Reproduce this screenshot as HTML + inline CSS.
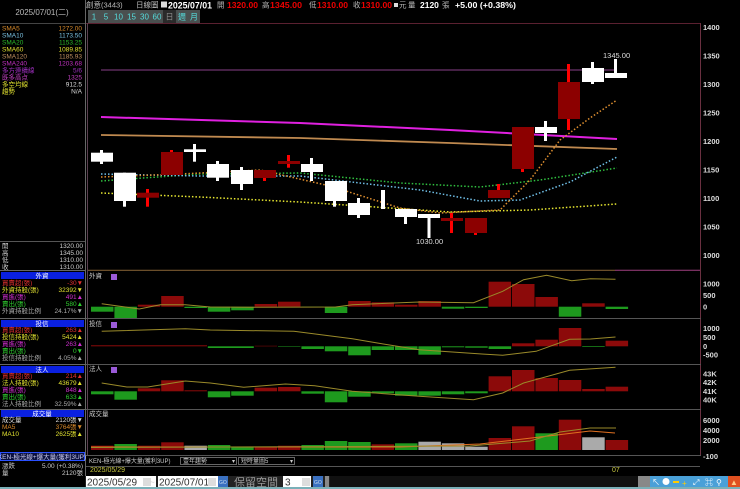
<!DOCTYPE html>
<html><head><meta charset="utf-8"><style>
html,body{margin:0;padding:0;background:#000;width:740px;height:489px;overflow:hidden}
svg{display:block}
text{font-family:"Liberation Sans","Noto Sans CJK TC",sans-serif}
</style></head><body>
<svg width="740" height="489" viewBox="0 0 740 489" xmlns="http://www.w3.org/2000/svg">
<rect width="740" height="489" fill="#000"/>
<!-- header -->
<g font-size="7.5">
<text x="86" y="7.5" fill="#bbb">創意(3443)</text>
<text x="136" y="7.5" fill="#bbb">日線圖</text>
<rect x="161" y="1.5" width="6" height="6" fill="#ddd"/>
<text x="168" y="8.5" fill="#fff" font-weight="bold" font-size="9.5" textLength="44" lengthAdjust="spacingAndGlyphs">2025/07/01</text>
<text x="217" y="7.5" fill="#bbb">開</text><text x="227" y="8" fill="#e00" font-weight="bold" font-size="8.5" textLength="31" lengthAdjust="spacingAndGlyphs">1320.00</text>
<text x="262" y="7.5" fill="#bbb">高</text><text x="270" y="8" fill="#e00" font-weight="bold" font-size="8.5" textLength="32" lengthAdjust="spacingAndGlyphs">1345.00</text>
<text x="309" y="7.5" fill="#bbb">低</text><text x="317" y="8" fill="#e00" font-weight="bold" font-size="8.5" textLength="31" lengthAdjust="spacingAndGlyphs">1310.00</text>
<text x="353" y="7.5" fill="#bbb">收</text><text x="361" y="8" fill="#e00" font-weight="bold" font-size="8.5" textLength="31" lengthAdjust="spacingAndGlyphs">1310.00</text>
<rect x="394" y="3" width="4" height="4" fill="#ddd"/><text x="399" y="7.5" fill="#bbb">元</text>
<text x="408" y="7.5" fill="#bbb">量</text><text x="420" y="8" fill="#fff" font-weight="bold" font-size="8.5">2120</text>
<text x="442" y="7.5" fill="#bbb">張</text>
<text x="455" y="8" fill="#fff" font-weight="bold" font-size="8.5" textLength="61" lengthAdjust="spacingAndGlyphs">+5.00 (+0.38%)</text>
</g>
<!-- toolbar -->
<g font-size="8" text-anchor="middle">
<rect x="88" y="10" width="112" height="13" fill="#4a4f4f"/>
<rect x="163" y="10" width="13" height="13" fill="#2a2a2a"/>
<g fill="#5dd">
<text x="94" y="19.5">1</text><text x="106" y="19.5">5</text><text x="118.5" y="19.5">10</text><text x="131.5" y="19.5">15</text><text x="144.5" y="19.5">30</text><text x="157" y="19.5">60</text>
</g>
<text x="169.5" y="19.5" fill="#888">日</text><text x="182" y="19.5" fill="#5dd">週</text><text x="194" y="19.5" fill="#5dd">月</text>
</g>
<!-- left panel -->
<line x1="85.5" y1="0" x2="85.5" y2="476" stroke="#666"/>
<text x="42" y="15" fill="#bbb" font-size="8" text-anchor="middle">2025/07/01(二)</text>
<line x1="0" y1="23.5" x2="85" y2="23.5" stroke="#444"/>
<g font-size="6.5">
<text x="2" y="30.5" fill="#d98a2a">SMA5</text><text x="82" y="30.5" fill="#d98a2a" text-anchor="end">1272.00</text>
<text x="2" y="37.5" fill="#7ac0e0">SMA10</text><text x="82" y="37.5" fill="#7ac0e0" text-anchor="end">1173.50</text>
<text x="2" y="44.5" fill="#2ab82a">SMA20</text><text x="82" y="44.5" fill="#2ab82a" text-anchor="end">1153.25</text>
<text x="2" y="51.5" fill="#e0e030">SMA60</text><text x="82" y="51.5" fill="#e0e030" text-anchor="end">1089.85</text>
<text x="2" y="58.5" fill="#c09060">SMA120</text><text x="82" y="58.5" fill="#c09060" text-anchor="end">1185.93</text>
<text x="2" y="65.5" fill="#c030c0">SMA240</text><text x="82" y="65.5" fill="#c030c0" text-anchor="end">1203.68</text>
<text x="2" y="72.5" fill="#a030c0">多方連續線</text><text x="82" y="72.5" fill="#a030c0" text-anchor="end">5/6</text>
<text x="2" y="79.5" fill="#c040c0">既多高点</text><text x="82" y="79.5" fill="#c040c0" text-anchor="end">1325</text>
<text x="2" y="86.5" fill="#e0e030">多空均線</text><text x="82" y="86.5" fill="#ddd" text-anchor="end">912.5</text>
<text x="2" y="93.5" fill="#e0e030">趨勢</text><text x="82" y="93.5" fill="#ddd" text-anchor="end">N/A</text>
</g>
<line x1="0" y1="241.5" x2="85" y2="241.5" stroke="#555"/>
<g font-size="6.5" fill="#ccc">
<text x="2" y="248">開</text><text x="83" y="248" text-anchor="end">1320.00</text>
<text x="2" y="255">高</text><text x="83" y="255" text-anchor="end">1345.00</text>
<text x="2" y="262">低</text><text x="83" y="262" text-anchor="end">1310.00</text>
<text x="2" y="269">收</text><text x="83" y="269" text-anchor="end">1310.00</text>
</g>
<g font-size="6.5">
<line x1="0" y1="270.5" x2="85" y2="270.5" stroke="#666"/>
<rect x="1" y="272" width="83" height="7" fill="#0a20e0"/><text x="42" y="278" fill="#fff" text-anchor="middle">外資</text>
<text x="2" y="285" fill="#e03030">買賣超(張)</text><text x="83" y="285" fill="#e03030" text-anchor="end">-30▼</text>
<text x="2" y="292" fill="#e0e030">外資持股(張)</text><text x="83" y="292" fill="#e0e030" text-anchor="end">32392▼</text>
<text x="2" y="299" fill="#d030d0">買進(張)</text><text x="83" y="299" fill="#d030d0" text-anchor="end">491▲</text>
<text x="2" y="306" fill="#30d030">賣出(張)</text><text x="83" y="306" fill="#30d030" text-anchor="end">580▲</text>
<text x="2" y="313" fill="#aaa">外資持股比例</text><text x="83" y="313" fill="#aaa" text-anchor="end">24.17%▼</text>
<line x1="0" y1="318.5" x2="85" y2="318.5" stroke="#666"/>
<rect x="1" y="320" width="83" height="7" fill="#0a20e0"/><text x="42" y="326" fill="#fff" text-anchor="middle">投信</text>
<text x="2" y="332" fill="#e03030">買賣超(張)</text><text x="83" y="332" fill="#e03030" text-anchor="end">263▲</text>
<text x="2" y="339" fill="#e0e030">投信持股(張)</text><text x="83" y="339" fill="#e0e030" text-anchor="end">5424▲</text>
<text x="2" y="346" fill="#d030d0">買進(張)</text><text x="83" y="346" fill="#d030d0" text-anchor="end">263▲</text>
<text x="2" y="353" fill="#30d030">賣出(張)</text><text x="83" y="353" fill="#30d030" text-anchor="end">0▼</text>
<text x="2" y="360" fill="#aaa">投信持股比例</text><text x="83" y="360" fill="#aaa" text-anchor="end">4.05%▲</text>
<line x1="0" y1="364.5" x2="85" y2="364.5" stroke="#666"/>
<rect x="1" y="366" width="83" height="7" fill="#0a20e0"/><text x="42" y="372" fill="#fff" text-anchor="middle">法人</text>
<text x="2" y="378" fill="#e03030">買賣超(張)</text><text x="83" y="378" fill="#e03030" text-anchor="end">214▲</text>
<text x="2" y="385" fill="#e0e030">法人持股(張)</text><text x="83" y="385" fill="#e0e030" text-anchor="end">43679▲</text>
<text x="2" y="392" fill="#d030d0">買進(張)</text><text x="83" y="392" fill="#d030d0" text-anchor="end">848▲</text>
<text x="2" y="399" fill="#30d030">賣出(張)</text><text x="83" y="399" fill="#30d030" text-anchor="end">633▲</text>
<text x="2" y="406" fill="#aaa">法人持股比例</text><text x="83" y="406" fill="#aaa" text-anchor="end">32.59%▲</text>
<line x1="0" y1="409.5" x2="85" y2="409.5" stroke="#666"/>
<rect x="1" y="410" width="83" height="7" fill="#0a20e0"/><text x="42" y="416" fill="#fff" text-anchor="middle">成交量</text>
<text x="2" y="422" fill="#ddd">成交量</text><text x="83" y="422" fill="#ddd" text-anchor="end">2120張▼</text>
<text x="2" y="429" fill="#d98a2a">MA5</text><text x="83" y="429" fill="#d98a2a" text-anchor="end">3764張▼</text>
<text x="2" y="436" fill="#e0e030">MA10</text><text x="83" y="436" fill="#e0e030" text-anchor="end">2625張▲</text>
<rect x="0.5" y="452.5" width="84" height="8" fill="#0a1040" stroke="#2a50ff"/>
<text x="42" y="459" fill="#cce" text-anchor="middle">KEN-極光線+爆大量(獲利3UP)</text>
<text x="2" y="468" fill="#ccc">漲跌</text><text x="83" y="468" fill="#ccc" text-anchor="end">5.00 (+0.38%)</text>
<text x="2" y="475" fill="#ccc">量</text><text x="83" y="475" fill="#ccc" text-anchor="end">2120張</text>
</g>
<!-- main chart frame -->
<line x1="86" y1="23.5" x2="701" y2="23.5" stroke="#5a2030"/>
<line x1="700.5" y1="23" x2="700.5" y2="455" stroke="#6a3040"/>
<line x1="87.5" y1="23" x2="87.5" y2="455" stroke="#5a4050"/>
<g font-size="7.5" fill="#ddd" font-weight="bold">
<text x="703" y="30">1400</text><text x="703" y="58.5">1350</text><text x="703" y="87">1300</text><text x="703" y="115.5">1250</text><text x="703" y="144">1200</text><text x="703" y="172.5">1150</text><text x="703" y="201">1100</text><text x="703" y="229.5">1050</text><text x="703" y="258">1000</text>
</g>
<line x1="101" y1="70" x2="617" y2="70" stroke="#5a2a5a" stroke-width="1.5"/>
<polyline points="101,117 300,123 450,130 617,139" fill="none" stroke="#e020e0" stroke-width="2"/>
<polyline points="101,135 300,138 450,143 617,149" fill="none" stroke="#c08a50" stroke-width="1.8"/>
<g fill="none" stroke-width="1.5" stroke-dasharray="1.5,2">
<polyline points="101,193 200,197 300,202 450,212 530,210 617,204" stroke="#e8e830"/>
<polyline points="101,181 200,174 300,173 400,183 480,187 540,180 617,168" stroke="#30c040"/>
<polyline points="101,174 200,176 300,176 420,190 480,201 520,200 570,182 617,157" stroke="#70c0e8"/>
<polyline points="101,177 180,174 260,170 330,186 400,208 440,213 500,210 530,180 560,140 590,118 617,100" stroke="#e09030"/>
</g>
<!-- candles -->
<g>
<g fill="#fff">
<rect x="100" y="150" width="3" height="14"/><rect x="91" y="152.7" width="22" height="9"/>
<rect x="123" y="172.7" width="3" height="34"/><rect x="114" y="172.7" width="22" height="28.3"/>
<rect x="193" y="144" width="3" height="17.7"/><rect x="184" y="149.3" width="22" height="2.7"/>
<rect x="216" y="161" width="3" height="20"/><rect x="207" y="164" width="22" height="13.7"/>
<rect x="240" y="167" width="3" height="23"/><rect x="231" y="170" width="22" height="14"/>
<rect x="310" y="158" width="3" height="23"/><rect x="301" y="164" width="22" height="8"/>
<rect x="333" y="181" width="3" height="25.7"/><rect x="325" y="181" width="22" height="20"/>
<rect x="357" y="198" width="3" height="20"/><rect x="348" y="203" width="22" height="12"/>
<rect x="381" y="190" width="4" height="19"/>
<rect x="404" y="209" width="3" height="15"/><rect x="395" y="209" width="22" height="8"/>
<rect x="427.5" y="214" width="3" height="24"/><rect x="418" y="214" width="22" height="4"/>
<rect x="544" y="121" width="3" height="20"/><rect x="535" y="127" width="22" height="6"/>
<rect x="591" y="62" width="3" height="22"/><rect x="582" y="68" width="22" height="14"/>
<rect x="614" y="59" width="3" height="19"/><rect x="605" y="73" width="22" height="5"/>
</g>
<g fill="#f00">
<rect x="146" y="189" width="3" height="17.7"/>
<rect x="170" y="150" width="3" height="25"/>
<rect x="263" y="170" width="3" height="11"/>
<rect x="287" y="155" width="3" height="12.7"/>
<rect x="450" y="213" width="3" height="20"/>
<rect x="474" y="218" width="3" height="17"/>
<rect x="497" y="184" width="3" height="14"/>
<rect x="521" y="127" width="3" height="45"/>
<rect x="567" y="64" width="3" height="66"/>
</g>
<g fill="#8c0000">
<rect x="137" y="192.7" width="22" height="5"/>
<rect x="161" y="152" width="22" height="23"/>
<rect x="254" y="170" width="22" height="8"/>
<rect x="278" y="161" width="22" height="3"/>
<rect x="441" y="218" width="22" height="3"/>
<rect x="465" y="218" width="22" height="15"/>
<rect x="488" y="190" width="22" height="8"/>
<rect x="512" y="127" width="22" height="42"/>
<rect x="558" y="82" width="22" height="37"/>
</g>
</g>
<text x="603" y="58" fill="#ddd" font-size="7.5">1345.00</text>
<text x="416" y="244" fill="#ddd" font-size="7.5">1030.00</text>
<line x1="88" y1="270.3" x2="615" y2="270.3" stroke="#7a5a30" stroke-width="1.2"/>
<line x1="615" y1="270.3" x2="700" y2="270.3" stroke="#a04080"/>
<g stroke="#555">
<line x1="86" y1="318.5" x2="701" y2="318.5"/><line x1="86" y1="364.5" x2="701" y2="364.5"/><line x1="86" y1="409.5" x2="701" y2="409.5"/><line x1="86" y1="455.5" x2="701" y2="455.5"/>
</g>
<g font-size="6.5" fill="#ccc">
<text x="89" y="278">外資</text><text x="89" y="326">投信</text><text x="89" y="371">法人</text><text x="89" y="416">成交量</text>
</g>
<g fill="#9a5ad8"><rect x="111" y="274" width="6" height="6"/><rect x="111" y="322" width="6" height="6"/><rect x="111" y="367" width="6" height="6"/></g>
<g font-size="7.5" fill="#ddd" font-weight="bold">
<text x="703" y="286.5">1000</text><text x="703" y="298">500</text><text x="703" y="309.5">0</text>
<text x="703" y="331">1000</text><text x="703" y="340">500</text><text x="703" y="349">0</text><text x="703" y="357.5">-500</text>
<text x="703" y="376.5">43K</text><text x="703" y="385">42K</text><text x="703" y="394">41K</text><text x="703" y="402.5">40K</text>
<text x="703" y="423">6000</text><text x="703" y="433">4000</text><text x="703" y="443">2000</text><text x="703" y="459">-100</text>
</g>
<!-- panel 1 -->
<g fill="#1e9a1e">
<rect x="91" y="306.7" width="22.5" height="5"/><rect x="114.4" y="306.7" width="22.5" height="11.3"/>
<rect x="184.4" y="306.7" width="22.5" height="1.3"/><rect x="207.8" y="306.7" width="22.5" height="5"/><rect x="231.2" y="306.7" width="22.5" height="3.6"/>
<rect x="301.4" y="306.7" width="22.5" height="0.8"/><rect x="324.8" y="306.7" width="22.5" height="6.3"/>
<rect x="441.8" y="306.7" width="22.5" height="2"/><rect x="465.2" y="306.7" width="22.5" height="1.3"/>
<rect x="558.8" y="306.7" width="22.5" height="10"/><rect x="605.6" y="306.7" width="22.5" height="2.3"/>
</g>
<g fill="#8c0a0a">
<rect x="137.8" y="304.7" width="22.5" height="2"/><rect x="161.2" y="296" width="22.5" height="10.7"/>
<rect x="254.6" y="304" width="22.5" height="2.7"/><rect x="278" y="301.7" width="22.5" height="5"/>
<rect x="348.2" y="301" width="22.5" height="5.7"/><rect x="371.6" y="302.3" width="22.5" height="4.4"/><rect x="395" y="304.7" width="22.5" height="2"/><rect x="418.4" y="301" width="22.5" height="5.7"/>
<rect x="488.6" y="281.7" width="22.5" height="25"/><rect x="512" y="284" width="22.5" height="22.7"/><rect x="535.4" y="297" width="22.5" height="9.7"/>
<rect x="582.2" y="303.3" width="22.5" height="3.4"/>
</g>
<polyline points="101.7,303.7 139.3,309 160.2,304.7 185.3,304.7 210.3,307 252.1,307.3 335.6,307 352.3,304.7 419.2,302 473.5,302.7 502.7,291.3 523.6,279.7 546.6,275.3 571.7,280.7 590.5,278.7 615.5,279.3" fill="none" stroke="#9a8a2a"/>
<!-- panel 2 -->
<g fill="#8c0a0a">
<rect x="91" y="345.3" width="116" height="1"/>
<rect x="254.6" y="345.8" width="22.5" height="0.5"/>
<rect x="512" y="343.3" width="22.5" height="3"/><rect x="535.4" y="339.7" width="22.5" height="6.6"/><rect x="558.8" y="328" width="22.5" height="18.3"/><rect x="605.6" y="340.7" width="22.5" height="5.6"/>
</g>
<g fill="#1e9a1e">
<rect x="207.8" y="346.3" width="46" height="1.7"/>
<rect x="278" y="346.3" width="22.5" height="0.5"/>
<rect x="301.4" y="346.3" width="22.5" height="2.7"/><rect x="324.8" y="346.3" width="22.5" height="5"/><rect x="348.2" y="346.3" width="22.5" height="9"/><rect x="371.6" y="346.3" width="22.5" height="3.7"/><rect x="395" y="346.3" width="22.5" height="3.7"/><rect x="418.4" y="346.3" width="22.5" height="8.4"/>
<rect x="441.8" y="346.3" width="22.5" height="1"/><rect x="465.2" y="346.3" width="22.5" height="1.4"/><rect x="488.6" y="346.3" width="22.5" height="2.7"/>
<rect x="582.2" y="346.3" width="22.5" height="0.7"/>
</g>
<polyline points="101.7,331.3 185.3,328.7 210.3,330 293.9,331.3 352.3,338.7 377.4,343 419.2,349.7 481.8,354 502.7,355.3 536.1,351.3 569.6,339.3 590.5,339 615.5,337" fill="none" stroke="#9a8a2a"/>
<!-- panel 3 -->
<g fill="#1e9a1e">
<rect x="91" y="391.3" width="22.5" height="3"/><rect x="114.4" y="391.3" width="22.5" height="8.4"/>
<rect x="207.8" y="391.3" width="22.5" height="6"/><rect x="231.2" y="391.3" width="22.5" height="4.4"/>
<rect x="301.4" y="391.3" width="22.5" height="2.4"/><rect x="324.8" y="391.3" width="22.5" height="11"/><rect x="348.2" y="391.3" width="22.5" height="5.4"/><rect x="371.6" y="391.3" width="22.5" height="2"/><rect x="395" y="391.3" width="22.5" height="4.4"/><rect x="418.4" y="391.3" width="22.5" height="4.4"/><rect x="441.8" y="391.3" width="22.5" height="3"/><rect x="465.2" y="391.3" width="22.5" height="2"/>
</g>
<g fill="#8c0a0a">
<rect x="137.8" y="388.3" width="22.5" height="3"/><rect x="161.2" y="380.3" width="22.5" height="11"/><rect x="184.4" y="390.3" width="22.5" height="1"/>
<rect x="254.6" y="387.7" width="22.5" height="3.6"/><rect x="278" y="387" width="22.5" height="4.3"/>
<rect x="488.6" y="376.3" width="22.5" height="15"/><rect x="512" y="370" width="22.5" height="21.3"/><rect x="535.4" y="378" width="22.5" height="13.3"/><rect x="558.8" y="380" width="22.5" height="11.3"/><rect x="582.2" y="389" width="22.5" height="2.3"/><rect x="605.6" y="386.7" width="22.5" height="4.6"/>
</g>
<polyline points="101.7,383 126.8,387 147.7,387 185.3,381 210.3,383 243.7,387.3 285.5,384 314.7,385.7 352.3,391.3 419.2,396.3 473.5,399.7 502.7,393 523.6,383 569.6,370.3 615.5,367.3" fill="none" stroke="#9a8a2a"/>
<!-- volume -->
<g>
<rect x="91" y="445.7" width="22.5" height="4.3" fill="#8c0a0a"/>
<rect x="114.4" y="444" width="22.5" height="6" fill="#1e9a1e"/>
<rect x="137.8" y="445.7" width="22.5" height="4.3" fill="#8c0a0a"/>
<rect x="161.2" y="442.3" width="22.5" height="7.7" fill="#8c0a0a"/>
<rect x="184.4" y="445.7" width="22.5" height="4.3" fill="#aaa"/>
<rect x="207.8" y="445" width="22.5" height="5" fill="#1e9a1e"/>
<rect x="231.2" y="446.7" width="22.5" height="3.3" fill="#1e9a1e"/>
<rect x="254.6" y="447.3" width="22.5" height="2.7" fill="#8c0a0a"/>
<rect x="278" y="445.7" width="22.5" height="4.3" fill="#8c0a0a"/>
<rect x="301.4" y="445" width="22.5" height="5" fill="#1e9a1e"/>
<rect x="324.8" y="441" width="22.5" height="9" fill="#1e9a1e"/>
<rect x="348.2" y="442" width="22.5" height="8" fill="#1e9a1e"/>
<rect x="371.6" y="444.3" width="22.5" height="5.7" fill="#8c0a0a"/>
<rect x="395" y="443.3" width="22.5" height="6.7" fill="#1e9a1e"/>
<rect x="418.4" y="441.7" width="22.5" height="8.3" fill="#aaa"/>
<rect x="441.8" y="443.3" width="22.5" height="6.7" fill="#aaa"/>
<rect x="465.2" y="446.7" width="22.5" height="3.3" fill="#aaa"/>
<rect x="488.6" y="438" width="22.5" height="12" fill="#8c0a0a"/>
<rect x="512" y="426.3" width="22.5" height="23.7" fill="#8c0a0a"/>
<rect x="535.4" y="433.3" width="22.5" height="16.7" fill="#1e9a1e"/>
<rect x="558.8" y="419.7" width="22.5" height="30.3" fill="#8c0a0a"/>
<rect x="582.2" y="437.3" width="22.5" height="12.7" fill="#aaa"/>
<rect x="605.6" y="440" width="22.5" height="10" fill="#8c0a0a"/>
</g>
<polyline points="91,447 400,447 480,444 540,437 590,431 615,433" fill="none" stroke="#e07020"/>
<polyline points="91,447.5 470,446 530,441 560,432 590,428 616,428" fill="none" stroke="#9a8a2a"/>
<!-- strip -->
<line x1="86" y1="466.5" x2="700" y2="466.5" stroke="#555"/>
<g font-size="6" fill="#ccc">
<text x="89" y="463">KEN-極光線+爆大量(獲利3UP)</text>
<rect x="180.5" y="457.5" width="56" height="7" fill="none" stroke="#666"/><text x="183" y="463">壹年趨勢</text><text x="232" y="463">▾</text>
<rect x="238.5" y="457.5" width="56" height="7" fill="none" stroke="#666"/><text x="241" y="463">短時量圖5</text><text x="290" y="463">▾</text>
</g>
<g font-size="7" fill="#c8c840"><text x="90" y="472">2025/05/29</text><text x="612" y="472">07</text></g>
<!-- bottom row -->
<rect x="85" y="476" width="655" height="11" fill="#222"/>
<rect x="0" y="487" width="740" height="2" fill="#7ab0b8"/>
<rect x="86" y="476" width="70" height="11" fill="#fff"/><text x="87" y="485.5" font-size="10" fill="#333">2025/05/29</text>
<rect x="143" y="478" width="8" height="8" fill="#ddd"/>
<text x="150" y="485" font-size="8" fill="#ccc">~</text>
<rect x="158" y="476" width="60" height="11" fill="#fff"/><text x="159" y="485.5" font-size="10" fill="#333">2025/07/01</text>
<rect x="208" y="478" width="8" height="8" fill="#ddd"/>
<rect x="218" y="476" width="10" height="11" fill="#3a70c0"/><text x="219" y="484" font-size="5" fill="#cde">GO</text>
<text x="234" y="486" font-size="11" fill="#999">保留空間</text>
<rect x="283" y="476" width="28" height="11" fill="#fff"/><text x="285" y="485.5" font-size="10" fill="#333">3</text>
<rect x="302" y="478" width="8" height="8" fill="#ddd"/>
<rect x="313" y="476" width="10" height="11" fill="#3a70c0"/><text x="314" y="484" font-size="5" fill="#cde">GO</text>
<rect x="325" y="476" width="4" height="11" fill="#888"/>
<rect x="330" y="476" width="308" height="11" fill="#111"/>
<rect x="638" y="476" width="12" height="11" fill="#888"/>
<rect x="650" y="476" width="90" height="11" fill="#4aa0d8"/>
<g font-size="8" fill="#fff">
<text x="652" y="485">↖</text><circle cx="666" cy="481.5" r="3.5" fill="#fff"/><rect x="673" y="481" width="6" height="2" fill="#fc0"/>
<text x="682" y="486" fill="#fc0">+</text><text x="693" y="485">⤢</text><text x="705" y="485">⌘</text><text x="716" y="485">⚲</text>
<rect x="728" y="476" width="12" height="11" fill="#e05020"/><text x="730" y="485" fill="#fc8">▲</text>
</g>
</svg>
</body></html>
